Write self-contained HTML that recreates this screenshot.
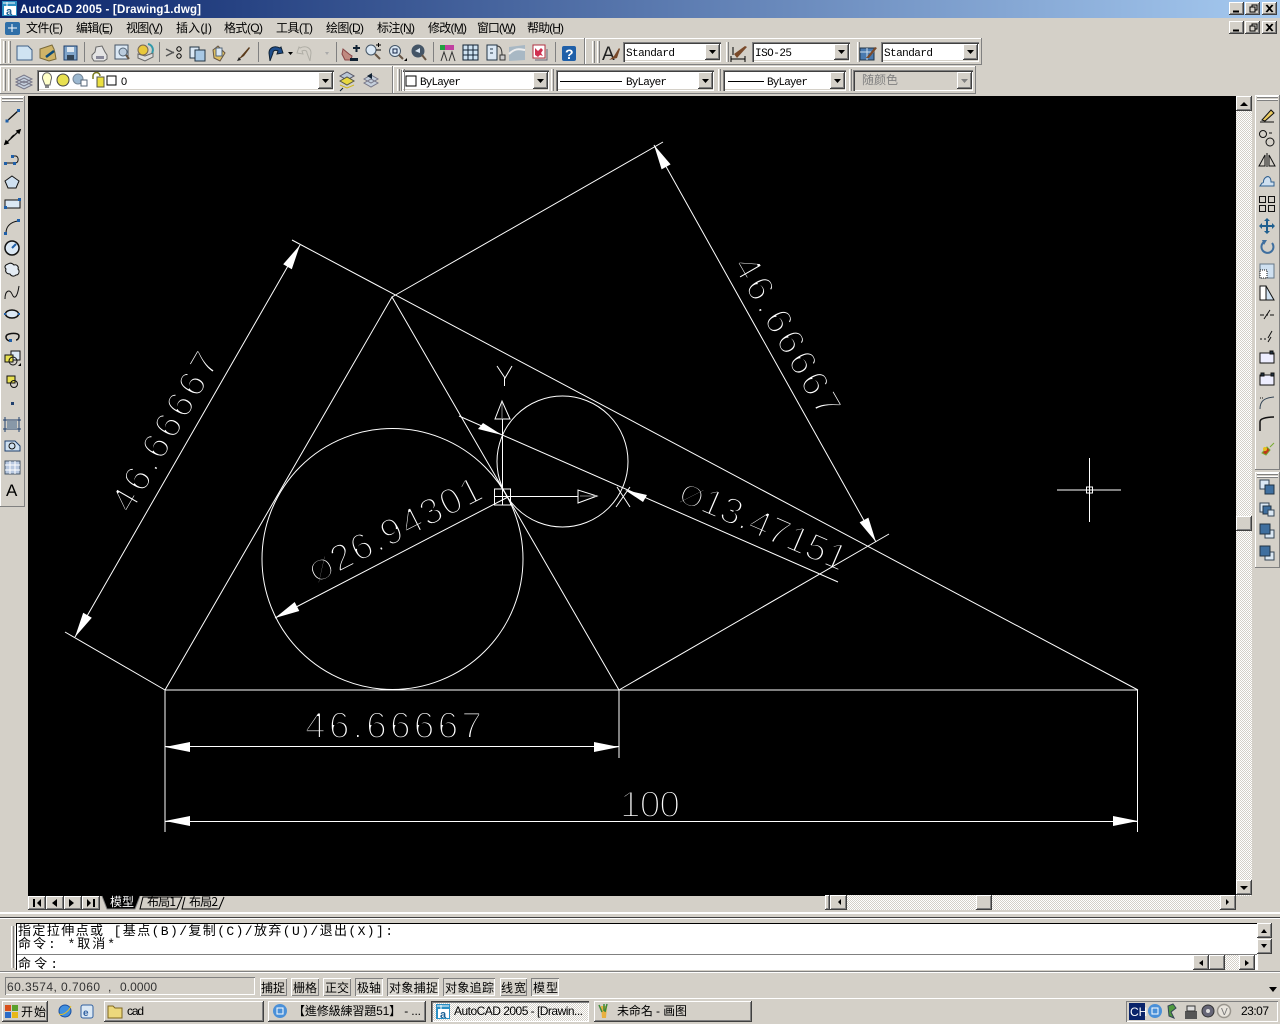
<!DOCTYPE html>
<html><head><meta charset="utf-8"><title>AutoCAD 2005</title>
<style>
html,body{margin:0;padding:0;width:1280px;height:1024px;overflow:hidden;background:#d4d0c8}
.a{position:absolute}
.up{position:absolute;background:#d4d0c8;box-shadow:inset -1px -1px #404040,inset 1px 1px #fff,inset -2px -2px #808080}
.tb{position:absolute;background:#d4d0c8;box-shadow:inset -1px -1px #808080,inset 1px 1px #fff}
.sk{position:absolute;background:#fff;box-shadow:inset 1px 1px #808080,inset 2px 2px #404040,inset -1px -1px #fff,inset -2px -2px #d4d0c8}
.ds{position:absolute;background:conic-gradient(#fff 25%,#d4d0c8 0 50%,#fff 0 75%,#d4d0c8 0) 0 0/2px 2px}
svg{position:absolute;left:0;top:0}
.m{font:12px "Liberation Sans","WenQuanYi Zen Hei","Noto Sans CJK SC",sans-serif;fill:#000}
.c{font:11px "Liberation Mono","Noto Sans CJK SC",monospace;fill:#000}
.s{font:12px "WenQuanYi Zen Hei","Noto Sans CJK SC",sans-serif;fill:#000}
.cmd{font:13px "Liberation Mono","WenQuanYi Zen Hei","Noto Sans CJK SC",monospace;fill:#000}
.t{font:12px "Liberation Sans","WenQuanYi Zen Hei","Noto Sans CJK TC",sans-serif;fill:#000}
.d{font-family:"Liberation Sans",sans-serif;font-size:37px;fill:#fff;stroke:#000;stroke-width:2}
</style></head><body>
<div class="a" style="left:0;top:0;width:1280px;height:18px;background:linear-gradient(90deg,#0a246a,#a6caf0)"></div>
<!-- toolbars -->
<div class="tb" style="left:0;top:38px;width:585px;height:27px"></div>
<div class="tb" style="left:585px;top:38px;width:397px;height:27px"></div>
<div class="tb" style="left:0;top:66px;width:393px;height:28px"></div>
<div class="tb" style="left:393px;top:66px;width:583px;height:28px"></div>
<div class="sk" style="left:623px;top:42px;width:98px;height:20px"></div>
<div class="sk" style="left:752px;top:42px;width:98px;height:20px"></div>
<div class="sk" style="left:881px;top:42px;width:98px;height:20px"></div>
<div class="sk" style="left:37px;top:70px;width:297px;height:21px"></div>
<div class="sk" style="left:401px;top:70px;width:148px;height:21px"></div>
<div class="sk" style="left:556px;top:70px;width:158px;height:21px"></div>
<div class="sk" style="left:723px;top:70px;width:123px;height:21px"></div>
<div class="sk" style="left:853px;top:70px;width:120px;height:21px;background:#d4d0c8"></div>
<div class="up" style="left:705px;top:44px;width:15px;height:16px"></div>
<div class="up" style="left:834px;top:44px;width:15px;height:16px"></div>
<div class="up" style="left:963px;top:44px;width:15px;height:16px"></div>
<div class="up" style="left:318px;top:72px;width:15px;height:17px"></div>
<div class="up" style="left:533px;top:72px;width:15px;height:17px"></div>
<div class="up" style="left:698px;top:72px;width:15px;height:17px"></div>
<div class="up" style="left:830px;top:72px;width:15px;height:17px"></div>
<div class="up" style="left:957px;top:72px;width:15px;height:17px"></div>
<!-- window buttons -->
<div class="up" style="left:1229px;top:2px;width:15px;height:13px"></div>
<div class="up" style="left:1245px;top:2px;width:15px;height:13px"></div>
<div class="up" style="left:1262px;top:2px;width:15px;height:13px"></div>
<div class="up" style="left:1229px;top:21px;width:15px;height:13px"></div>
<div class="up" style="left:1245px;top:21px;width:15px;height:13px"></div>
<div class="up" style="left:1262px;top:21px;width:15px;height:13px"></div>
<!-- side toolbars -->
<div class="tb" style="left:0;top:96px;width:25px;height:411px"></div>
<div class="tb" style="left:1255px;top:95px;width:25px;height:375px"></div>
<div class="tb" style="left:1255px;top:472px;width:25px;height:96px"></div>
<!-- canvas -->
<div class="a" style="left:28px;top:96px;width:1208px;height:800px;background:#000"></div>
<div class="ds" style="left:1236px;top:96px;width:16px;height:800px"></div>
<div class="up" style="left:1236px;top:96px;width:16px;height:15px"></div>
<div class="up" style="left:1236px;top:516px;width:16px;height:15px"></div>
<div class="up" style="left:1236px;top:880px;width:16px;height:15px"></div>
<!-- tab row -->
<div class="ds" style="left:847px;top:895px;width:373px;height:15px"></div>
<div class="up" style="left:825px;top:895px;width:5px;height:15px"></div>
<div class="up" style="left:830px;top:895px;width:17px;height:15px"></div>
<div class="up" style="left:976px;top:895px;width:16px;height:15px"></div>
<div class="up" style="left:1220px;top:895px;width:16px;height:15px"></div>
<div class="up" style="left:28px;top:896px;width:18px;height:14px"></div>
<div class="up" style="left:46px;top:896px;width:18px;height:14px"></div>
<div class="up" style="left:64px;top:896px;width:18px;height:14px"></div>
<div class="up" style="left:82px;top:896px;width:18px;height:14px"></div>
<div class="a" style="left:0;top:912px;width:1280px;height:2px;background:#fff"></div>
<div class="a" style="left:0;top:917px;width:1280px;height:1px;background:#404040"></div>
<div class="a" style="left:0;top:918px;width:1280px;height:1px;background:#fff"></div>
<!-- command -->
<div class="a" style="left:16px;top:923px;width:1242px;height:47px;background:#fff;border-top:1px solid #000;border-left:1px solid #000;box-sizing:border-box"></div>
<div class="a" style="left:17px;top:954px;width:1240px;height:1px;background:#808080"></div>
<div class="a" style="left:0;top:971px;width:1280px;height:1px;background:#808080"></div>
<div class="a" style="left:0;top:972px;width:1280px;height:1px;background:#fff"></div>
<div class="up" style="left:1257px;top:923px;width:15px;height:15px"></div>
<div class="up" style="left:1257px;top:939px;width:15px;height:15px"></div>
<div class="ds" style="left:1225px;top:955px;width:14px;height:15px"></div>
<div class="up" style="left:1193px;top:955px;width:16px;height:15px"></div>
<div class="up" style="left:1209px;top:955px;width:16px;height:15px"></div>
<div class="up" style="left:1239px;top:955px;width:16px;height:15px"></div>
<div class="a" style="left:5px;top:977px;width:250px;height:18px;box-shadow:inset 1px 1px #808080,inset -1px -1px #fff"></div>
<div class="a" style="left:260px;top:978px;width:27px;height:18px;box-shadow:inset 1px 1px #fff,inset -1px -1px #808080"></div>
<div class="a" style="left:291px;top:978px;width:28px;height:18px;box-shadow:inset 1px 1px #fff,inset -1px -1px #808080"></div>
<div class="a" style="left:323px;top:978px;width:28px;height:18px;box-shadow:inset 1px 1px #fff,inset -1px -1px #808080"></div>
<div class="a" style="left:355px;top:978px;width:28px;height:18px;box-shadow:inset 1px 1px #808080,inset -1px -1px #fff;background:#dad7d0"></div>
<div class="a" style="left:387px;top:978px;width:52px;height:18px;box-shadow:inset 1px 1px #808080,inset -1px -1px #fff;background:#dad7d0"></div>
<div class="a" style="left:443px;top:978px;width:52px;height:18px;box-shadow:inset 1px 1px #808080,inset -1px -1px #fff;background:#dad7d0"></div>
<div class="a" style="left:500px;top:978px;width:27px;height:18px;box-shadow:inset 1px 1px #fff,inset -1px -1px #808080"></div>
<div class="a" style="left:531px;top:978px;width:28px;height:18px;box-shadow:inset 1px 1px #808080,inset -1px -1px #fff;background:#dad7d0"></div>
<!-- taskbar -->
<div class="a" style="left:0;top:998px;width:1280px;height:1px;background:#fff"></div>
<div class="up" style="left:2px;top:1001px;width:46px;height:21px"></div>
<div class="up" style="left:104px;top:1001px;width:160px;height:21px"></div>
<div class="up" style="left:268px;top:1001px;width:158px;height:21px"></div>
<div class="a" style="left:431px;top:1001px;width:158px;height:21px;background:conic-gradient(#fff 25%,#d4d0c8 0 50%,#fff 0 75%,#d4d0c8 0) 0 0/2px 2px;box-shadow:inset 1px 1px #404040,inset 2px 2px #808080,inset -1px -1px #fff"></div>
<div class="up" style="left:594px;top:1001px;width:158px;height:21px"></div>
<div class="a" style="left:1126px;top:1001px;width:152px;height:21px;box-shadow:inset 1px 1px #808080,inset -1px -1px #fff"></div>

<svg width="1280" height="1024" viewBox="0 0 1280 1024">
<!-- title -->
<rect x="2" y="1" width="15" height="15" fill="#2a8fc4"/><rect x="4" y="6" width="12" height="9" fill="#fff"/><path d="M3 3h12M7 2v5" stroke="#fff"/>
<text x="6" y="15" style="font:700 11px 'Liberation Sans',sans-serif;fill:#1a5f94">a</text>
<text x="20" y="13" style="font:700 11.5px 'Liberation Sans',sans-serif;fill:#fff" textLength="181">AutoCAD 2005 - [Drawing1.dwg]</text>
<!-- win button glyphs -->
<g stroke="#000" fill="none">
<path d="M1233 12h6M1233 11h6"/><rect x="1250" y="7" width="5" height="5" fill="#d4d0c8"/><path d="M1252 7V5h5v5h-2M1252 5h5M1250 7h5"/><path d="M1266 5l6 7M1272 5l-6 7M1267 5l6 7M1273 5l-6 7"/>
<path d="M1233 31h6M1233 30h6"/><rect x="1250" y="26" width="5" height="5" fill="#d4d0c8"/><path d="M1252 26v-2h5v5h-2M1252 24h5M1250 26h5"/><path d="M1266 24l6 7M1272 24l-6 7M1267 24l6 7M1273 24l-6 7"/>
</g>
<!-- menu -->
<rect x="5" y="22" width="15" height="13" rx="2" fill="#2f6fa8"/><path d="M8 28h9M12 24v8" stroke="#fff"/>
<text class="m" x="26" y="32" textLength="37">文件(F)</text><text class="m" x="76" y="32" textLength="37">编辑(E)</text><text class="m" x="126" y="32" textLength="37">视图(V)</text><text class="m" x="176" y="32" textLength="36">插入(I)</text><text class="m" x="224" y="32" textLength="39">格式(O)</text><text class="m" x="276" y="32" textLength="37">工具(T)</text><text class="m" x="326" y="32" textLength="38">绘图(D)</text><text class="m" x="377" y="32" textLength="38">标注(N)</text><text class="m" x="428" y="32" textLength="39">修改(M)</text><text class="m" x="477" y="32" textLength="39">窗口(W)</text><text class="m" x="527" y="32" textLength="37">帮助(H)</text>
<path d="M54 33h5M104 33h5M154 33h5M203 33h4M254 33h6M304 33h5M355 33h5M406 33h6M457 33h7M506 33h7M554 33h6" stroke="#000"/>
<!-- grips & separators -->
<g stroke="#fff" fill="none"><path d="M3.5 41v22M8.5 41v22M3.5 69v22M8.5 69v22M592.5 41v22M597.5 41v22M397.5 69v22M402.5 69v22M551.5 69v22M718.5 69v22M849.5 69v22M726.5 42v20M857.5 42v20"/></g>
<g stroke="#808080" fill="none"><path d="M5.5 41v22M10.5 41v22M5.5 69v22M10.5 69v22M594.5 41v22M599.5 41v22M399.5 69v22M404.5 69v22M553.5 69v22M720.5 69v22M851.5 69v22M728.5 42v20M859.5 42v20"/>
<path d="M84.5 42v20M159.5 42v20M258.5 42v20M336.5 42v20M433.5 42v20M555.5 42v20"/></g>
<!-- toolbar1 icons -->
<g stroke-width="1">
<path d="M17 46h11l4 4v10H17z" fill="#cfe3f2" stroke="#3f5f85"/>
<path d="M40 49l12-4 2 4 1 4 1 6-7 2-9-3z" fill="#cfb468" stroke="#7a6a3a"/><path d="M46 57l8-6" stroke="#0a4a7a" stroke-width="2.500"/>
<rect x="64" y="46" width="13" height="14" fill="#7fa4c9" stroke="#1f3f6d"/><rect x="67" y="47" width="7" height="5" fill="#dfe8f0"/><rect x="67" y="55" width="7" height="5" fill="#345"/>
<path d="M95 52l1-5 6-1 3 6 2 3v4l-3 2H94l-2-3v-3z" fill="#e4e4e4" stroke="#666"/><rect x="96" y="56" width="8" height="3" fill="#889"/>
<path d="M115 45h13v14h-13z" fill="#dbe8f4" stroke="#456"/><circle cx="123" cy="52" r="4" fill="#bcd" stroke="#567"/><path d="M126 55l3 4" stroke="#654" stroke-width="2"/>
<path d="M138 54l7 2 8-3v4l-8 4-7-3z" fill="#ddd" stroke="#666"/><circle cx="143" cy="50" r="5" fill="#e8c83c" stroke="#765"/><path d="M148 44a6 6 0 0 1 4 9" stroke="#39a" fill="none" stroke-width="2"/>
<path d="M166 49l8 4M166 56l8-4" stroke="#555" stroke-width="1.500"/><circle cx="179" cy="49" r="2.200" fill="none" stroke="#000"/><circle cx="179" cy="56" r="2.200" fill="none" stroke="#000"/>
<rect x="190" y="47" width="9" height="11" fill="#dbe8f4" stroke="#234"/><rect x="195" y="50" width="10" height="11" fill="#a8c8e4" stroke="#234"/>
<path d="M213 50l5-4 7 7-5 8-6-3z" fill="#e0c060" stroke="#654"/><rect x="216" y="48" width="6" height="8" fill="#dbe8f4" stroke="#567"/>
<path d="M238 60l4-5 7-8 1 1-6 8z" fill="#5a3a1a"/><path d="M237 61l4-1-2-3z" fill="#222"/>
<path d="M280 48c-6-3-11 0-11 5l1 8 3-8c0-3 3-3 5-2l-1 3 6-1-2-6z" fill="#1e4d8b" stroke="#123"/><path d="M288 52h5l-2.500 3z" fill="#000"/>
<path d="M300 48c6-3 11 0 11 5l-1 8-3-8c0-3-3-3-5-2l1 3-6-1 2-6z" fill="#d4d0c8" stroke="#b0aea6"/><path d="M325 52h4l-2 3z" fill="#aaa"/>
<path d="M343 49l6 5 3 2-1 4h-6l-3-6z" fill="#c08a80" stroke="#844"/><path d="M353 48h7M356.500 45v7" stroke="#123" stroke-width="2"/><path d="M350 61h8v-3h-8z" fill="#123"/>
<circle cx="371" cy="50" r="5" fill="#dbe8f4" stroke="#456"/><path d="M375 54l5 5" stroke="#654" stroke-width="2"/><path d="M376 45h5M378.500 43v4M376 50h5" stroke="#000"/>
<circle cx="395" cy="51" r="5.500" fill="#dbe8f4" stroke="#456"/><rect x="393" y="49" width="4" height="4" fill="none" stroke="#124"/><path d="M399 55l4 4" stroke="#654" stroke-width="2"/><path d="M404 61h3v-3z" fill="#000"/>
<circle cx="418" cy="51" r="6" fill="#456" stroke="#456"/><path d="M415 51l5-3v5z" fill="#dbe8f4"/><path d="M422 55l4 5" stroke="#654" stroke-width="2"/>
<rect x="440" y="45" width="14" height="5" fill="#c040a0"/><rect x="440" y="45" width="5" height="5" fill="#20a040"/><path d="M441 61l3-9 3 9M449 61l3-9 3 9" stroke="#333" fill="none"/>
<rect x="463" y="45" width="15" height="15" fill="#cfe3f2" stroke="#123"/><path d="M468 45v15M473 45v15M463 50h15M463 55h15" stroke="#123"/>
<rect x="487" y="45" width="10" height="15" fill="#dbe8f4" stroke="#234"/><path d="M490 49h3M490 53h3" stroke="#234"/><path d="M497 46c4 0 5 4 5 9" fill="none" stroke="#333"/><path d="M500 55h5v5h-5z" fill="#ccc" stroke="#333"/>
<path d="M509 47l16-2v15l-16 1z" fill="#a8b8c4"/><path d="M509 54c6-6 10-5 16-4" fill="none" stroke="#eee" stroke-width="2"/>
<rect x="533" y="45" width="12" height="13" fill="#fff" stroke="#b03040"/><path d="M535 48l3 3 3-3 2 2-2 3 2 3-3-1-2 2-3-2z" fill="#d03050"/><path d="M535 60h12v-11" stroke="#667" fill="none"/>
<rect x="562" y="46" width="14" height="15" rx="2" fill="#1f5fa8"/><text x="565" y="59" style="font:700 14px 'Liberation Sans',sans-serif;fill:#fff">?</text>
<!-- style icons -->
<text x="602" y="60" style="font:400 19px 'Liberation Sans',sans-serif;fill:#222">A</text><path d="M609 60l5-4 5-8 1 1-3 9z" fill="#7a4a2a"/>
<path d="M731 59h14M731 56v6M745 56v6" stroke="#000"/><path d="M734 54l3 4 10-11-2-1z" fill="#7a4a2a"/><path d="M733 47v8" stroke="#000"/>
<rect x="860" y="48" width="14" height="12" fill="#4a7ab0" stroke="#234"/><path d="M860 52h14M867 48v12" stroke="#cde"/><path d="M866 58l9-11 2 1-8 10z" fill="#7a4a2a"/>
<!-- combo arrows -->
<g fill="#000"><path d="M709 50h7l-3.500 4zM838 50h7l-3.500 4zM967 50h7l-3.500 4zM322 79h7l-3.500 4zM537 79h7l-3.500 4zM702 79h7l-3.500 4zM834 79h7l-3.500 4z"/></g><path d="M961 79h7l-3.500 4z" fill="#808080"/>
<!-- layers -->
<g fill="#c4cfdc" stroke="#778"><path d="M16 85l8-4 8 4-8 4zM16 82l8-4 8 4-8 4zM16 79l8-4 8 4-8 4z"/></g>
<path d="M45 85h4v3h-4z" fill="#888"/><path d="M43 80a4.500 5 0 1 1 8 0l-1 5h-5z" fill="#ffffc8" stroke="#666"/>
<circle cx="63" cy="80" r="6" fill="#e8e050" stroke="#444"/>
<circle cx="78" cy="79" r="5" fill="#9cb8d0" stroke="#789"/><rect x="81" y="80" width="6" height="6" fill="#fff" stroke="#567"/>
<path d="M93 79v-3a3.500 3.500 0 0 1 7 0" fill="none" stroke="#7a7a20" stroke-width="1.500"/><rect x="97" y="77" width="7" height="10" fill="#ece040" stroke="#554"/>
<rect x="107" y="76" width="9" height="9" fill="#fff" stroke="#000"/>
<text x="121" y="85" style="font:11px 'Liberation Sans',sans-serif">0</text>
<path d="M340 76l7-4 7 4-7 4z" fill="#b9c6d6" stroke="#556"/><path d="M340 81l7-4 7 4-7 4z" fill="#e8d840" stroke="#554"/><path d="M340 85l7 3 7-3" stroke="#d0b820" fill="none"/><path d="M340 91l3-3" stroke="#123"/>
<g fill="#c4cfdc" stroke="#778"><path d="M364 83l7-4 7 4-7 4zM364 79l7-4 7 4-7 4z"/></g><path d="M367 76l5-3v6z" fill="#123"/>
<!-- combos text -->
<text class="c" x="626" y="56" textLength="49">Standard</text>
<text class="c" x="755" y="56" textLength="37">ISO-25</text>
<text class="c" x="884" y="56" textLength="49">Standard</text>
<rect x="406" y="76" width="10" height="10" fill="#fff" stroke="#000"/><text class="c" x="420" y="85" textLength="41">ByLayer</text>
<path d="M560 81.500h62M728 81.500h36" stroke="#000"/><text class="c" x="626" y="85" textLength="41">ByLayer</text><text class="c" x="767" y="85" textLength="41">ByLayer</text>
<text x="862" y="84" style="font:12px 'WenQuanYi Zen Hei','Noto Sans CJK SC',sans-serif;fill:#808080" textLength="36">随颜色</text>
</g>
<!-- left tool icons -->
<g fill="none" stroke="#111">
<path d="M2 97.500h21M2 100.500h21" stroke="#fff"/><path d="M2 98.500h21M2 101.500h21" stroke="#808080"/>
<path d="M7 121l11-10" stroke-width="1.300"/><rect x="5.500" y="119.500" width="3" height="3" fill="#1f5fa8" stroke="none"/><rect x="17" y="109" width="3" height="3" fill="#1f5fa8" stroke="none"/>
<path d="M5 144l15-14" stroke-width="1.300"/><path d="M5 144l3-1-2-2zM20 130l-3 1 2 2zM11 138l3-3" stroke="#000" stroke-width="1.500"/>
<path d="M6 163h9c4 0 4-6 1-7h-2"/><rect x="4" y="162" width="3" height="3" fill="#1f5fa8" stroke="none"/><rect x="13" y="162" width="3" height="3" fill="#1f5fa8" stroke="none"/><rect x="11" y="155" width="3" height="3" fill="#1f5fa8" stroke="none"/>
<path d="M12 176l7 5-3 7H8l-3-7z" fill="#cfe0f0"/>
<rect x="5" y="200" width="15" height="8" fill="#dbe8f4"/><rect x="4" y="206" width="3" height="3" fill="#1f5fa8" stroke="none"/><rect x="18" y="198" width="3" height="3" fill="#1f5fa8" stroke="none"/>
<path d="M6 233c0-7 5-11 12-12"/><rect x="4" y="232" width="3" height="3" fill="#1f5fa8" stroke="none"/><rect x="17" y="219" width="3" height="3" fill="#1f5fa8" stroke="none"/>
<circle cx="12" cy="248" r="7" fill="#dbe8f4" stroke-width="1.500"/><path d="M12 248l4-4" stroke="#1f5fa8" stroke-width="2"/>
<path d="M8 264c3-2 5 0 6 1 3-1 5 2 4 4 2 2 1 6-2 6-2 2-5 1-6-1-4 0-5-3-4-5-2-2-1-4 2-5z" fill="#e4ecf4"/>
<path d="M5 299c0-9 5-10 7-5s5 5 7-8"/>
<ellipse cx="12" cy="314" rx="6.500" ry="4" fill="#dbe8f4" stroke-width="1.500"/><rect x="4" y="313" width="2" height="2" fill="#1f5fa8" stroke="none"/><rect x="18" y="313" width="2" height="2" fill="#1f5fa8" stroke="none"/>
<path d="M9 341c-4-2-4-6 0-7s10-1 10 2-2 4-3 4" stroke-width="1.500"/><rect x="9" y="339" width="3" height="3" fill="#1f5fa8" stroke="none"/>
<rect x="11" y="351" width="9" height="9" fill="#dbe8f4"/><rect x="5" y="355" width="8" height="7" fill="#e8e050"/><circle cx="13" cy="361" r="4"/><path d="M18 366h3v-3z" fill="#000" stroke="none"/>
<rect x="7" y="376" width="8" height="7" fill="#e8e050" stroke-width="1"/><circle cx="14" cy="384" r="3.500"/>
<rect x="11" y="402" width="3" height="3" fill="#1f3f6d" stroke="none"/>
<path d="M5 417v15M19 417v15M3 420h18M3 429h18" stroke="#1f3f6d"/><path d="M7 421h10v8H7z" fill="#8898a8" stroke="none"/>
<path d="M5 441h10l5 5v5H5z" fill="#cfe0f0" stroke="#1f3f6d"/><circle cx="12" cy="446" r="3"/>
<rect x="5" y="461" width="15" height="13" fill="#b8c8e0" stroke="#456"/><path d="M10 461v13M15 461v13M5 465h15M5 470h15" stroke="#fff"/>
</g>
<text x="6" y="496" style="font:17px 'Liberation Sans',sans-serif">A</text>
<!-- right tool icons -->
<g fill="none" stroke="#111">
<path d="M1257 96.500h21M1257 99.500h21M1257 473.500h21M1257 476.500h21" stroke="#fff"/><path d="M1257 97.500h21M1257 100.500h21M1257 474.500h21M1257 477.500h21" stroke="#808080"/>
<path d="M1260 122h14M1262 120l9-10 3 3-9 8z" fill="#e8c860"/>
<circle cx="1263" cy="134" r="3.500"/><circle cx="1270" cy="142" r="4"/><path d="M1269 133h3"/>
<path d="M1267 153v14M1265 166h-6l6-11zM1269 166h6l-6-11z"/>
<path d="M1260 186h14v-4h-3c0-5-3-7-6-4s0 5-3 5z" fill="#cfe0f0" stroke="#2f5f8f"/>
<rect x="1259.500" y="196.500" width="6" height="6"/><rect x="1268.500" y="196.500" width="6" height="6"/><rect x="1259.500" y="205.500" width="6" height="6"/><rect x="1268.500" y="205.500" width="6" height="6"/>
<path d="M1267 219v14M1260 226h14" stroke="#1f5f8f" stroke-width="2"/><path d="M1267 218l-3 3h6zM1267 234l-3-3h6zM1259 226l3-3v6zM1275 226l-3-3v6z" fill="#1f5f8f" stroke="none"/>
<path d="M1272 243a6 6 0 1 1-8-1" stroke="#3f6f9f" stroke-width="2"/><path d="M1262 240l5 0-3 5z" fill="#3f6f9f" stroke="none"/>
<rect x="1260" y="264" width="14" height="14" fill="#cfe0f0" stroke="#678"/><path d="M1260 270h7v8h-7z" fill="#fff" stroke-dasharray="1 1"/>
<path d="M1260 286h6l8 14h-14z" fill="#cfe0f0"/><path d="M1260 286h6v14h-6z" fill="#fff"/>
<path d="M1260 315h4M1266 315h2M1270 315h4M1264 319l6-9"/>
<path d="M1260 339h2M1264 339h2M1268 338l4-7M1268 342l3-5"/>
<rect x="1260" y="353" width="14" height="10" fill="#eef"/><path d="M1270 351h3v3h-3z" fill="#234"/>
<rect x="1260" y="375" width="14" height="10" fill="#eef"/><path d="M1261 373h3v3h-3zM1271 373h3v3h-3z" fill="#234"/>
<path d="M1260 409c0-8 4-11 14-12" stroke="#345"/><path d="M1260 398h4" stroke-dasharray="1 1"/>
<path d="M1260 431v-9c0-1 0-2 2-3s7-2 12-2" stroke-width="1.500"/>
<path d="M1262 453l5-6 3 3-4 5zM1270 447l4-4" fill="#c03818" stroke="#7a3"/><circle cx="1265" cy="449" r="2" fill="#e8c020" stroke="none"/>
<rect x="1260" y="480" width="9" height="9" fill="#dbe8f4" stroke="#345"/><rect x="1265" y="485" width="9" height="9" fill="#3f6f9f" stroke="#234"/>
<rect x="1260" y="503" width="9" height="9" fill="#dbe8f4" stroke="#345"/><rect x="1263" y="506" width="8" height="8" fill="#3f6f9f" stroke="#234"/><rect x="1268" y="510" width="6" height="6" fill="#dbe8f4" stroke="#345"/>
<rect x="1265" y="530" width="9" height="8" fill="#dbe8f4" stroke="#345"/><rect x="1260" y="524" width="10" height="10" fill="#3f6f9f" stroke="#234"/>
<rect x="1265" y="552" width="9" height="8" fill="#dbe8f4" stroke="#345"/><rect x="1260" y="546" width="10" height="10" fill="#3f6f9f" stroke="#234"/>
</g>
<!-- scroll arrows -->
<g fill="#000">
<path d="M1240 106h8l-4-4zM1240 886h8l-4 4z"/>
<path d="M841 899l-3 3 3 3zM1226 899l3 3-3 3z"/>
<path d="M1261 933h6l-3-4zM1261 944h6l-3 4zM1203 960l-4 3 4 3zM1245 960l4 3-4 3z"/><path d="M1269 987h8l-4 5z"/>
<path d="M33 899v8h2v-8zM41 899l-4 4 4 4zM57 899l-5 4 5 4zM69 899l5 4-5 4zM87 899l4 4-4 4zM93 899v8h2v-8z"/>
</g>
<!-- tabs -->
<path d="M102 896l5 13h28l5-13z" fill="#000"/><path d="M102 896l5 13h28l5-13" fill="none" stroke="#808080"/>
<path d="M143 897l-3 12h37l5-12zM185 897l-3 12h37l5-12" fill="#d4d0c8" stroke="#000"/>
<text class="s" x="110" y="906" style="fill:#fff" textLength="24">模型</text>
<text class="s" x="147" y="906" textLength="29">布局1</text><text class="s" x="189" y="906" textLength="29">布局2</text>
<!-- dimension text (drawn first; eroded by black stroke to thin lines) -->
<text class="d" x="305" y="738" textLength="177">46,66667</text>
<text class="d" x="620" y="817" textLength="60">100</text>
<text class="d" transform="translate(131 515) rotate(-60)" textLength="178">46,66667</text>
<text class="d" transform="translate(732 265) rotate(60)" textLength="178">46,66667</text>
<text class="d" transform="translate(316 584) rotate(-27)" textLength="190"><tspan font-size="30">Ø</tspan>26,94301</text>
<text class="d" transform="translate(677 501) rotate(23.400)" textLength="178"><tspan font-size="30">Ø</tspan>13,47151</text>
<!-- drawing -->
<g stroke="#fff" fill="none" stroke-width="1">
<path d="M165 690H1138M165 690L392 297L619 690M292 240L1138 690M392 297L663 142M619 690L889 534M65 632L165 690"/>
<circle cx="392.500" cy="559" r="130.500"/><circle cx="562.500" cy="461.500" r="65.500"/>
<path d="M75 637L300 245M654 145L876 542M275 618L508 497M459 416L838 582"/>
<path d="M165 690V832M619 690V758M1137.500 690V832M165 746.500H619M165 821.500H1138"/>
<path d="M1057 490h64M1089.500 458v64"/><rect x="1086.500" y="487" width="6" height="6"/>
<rect x="494.500" y="489" width="16" height="16"/><path d="M502.500 419V505M494.500 496.500H578M502 401L495 419H510ZM578 490V503L597 496ZM497 366L505 378L512 366M504.500 378V386"/>
<path d="M502 403V418M580 496H596" stroke="#808080"/>
<path d="M617 487L630 507M630 487L616 507"/>
</g>
<g fill="#fff">
<path d="M165 747l25-5v10zM619 747l-25-5v10zM165 821l25-5v10zM1138 821l-25-5v10z"/>
<path d="M75 637L91.800 617.800L83.200 612.800ZM300 245L291.800 269.200L283.200 264.200ZM654 145L670.600 164.400L661.600 169.400ZM876 542L868.400 517.600L859.600 522.400ZM275 618L299.300 611L294.700 602ZM502 435L483 423L478 429ZM625 490L647 495L643 502Z"/>
</g>
<!-- command text -->
<text class="cmd" x="18" y="935" textLength="375">指定拉伸点或 [基点(B)/复制(C)/放弃(U)/退出(X)]:</text>
<text class="cmd" x="18" y="948" textLength="97">命令: *取消*</text>
<text class="cmd" x="18" y="968" textLength="40">命令:</text>
<path d="M11.500 926v42M15.500 926v42" stroke="#fff"/><path d="M13.500 926v42" stroke="#808080"/>
<!-- status -->
<g style="font:12px 'Liberation Sans',sans-serif;fill:#333"><text x="7" y="991" textLength="93">60.3574, 0.7060</text><text x="108" y="991">,</text><text x="120" y="991" textLength="37">0.0000</text></g>
<text class="s" x="261" y="992" textLength="24">捕捉</text><text class="s" x="293" y="992" textLength="24">栅格</text><text class="s" x="325" y="992" textLength="24">正交</text><text class="s" x="357" y="992" textLength="24">极轴</text><text class="s" x="389" y="992" textLength="49">对象捕捉</text><text class="s" x="445" y="992" textLength="49">对象追踪</text><text class="s" x="501" y="992" textLength="25">线宽</text><text class="s" x="533" y="992" textLength="25">模型</text>
<!-- taskbar content -->
<rect x="5" y="1005" width="6" height="6" fill="#d8501c"/><rect x="12" y="1005" width="6" height="6" fill="#5aa02c"/><rect x="5" y="1012" width="6" height="6" fill="#2c6cc8"/><rect x="12" y="1012" width="6" height="6" fill="#e8b818"/>
<text class="t" x="21" y="1016" textLength="25">开始</text>
<circle cx="65" cy="1011" r="6" fill="#3f8fe0" stroke="#1a4f9f"/><path d="M59 1014c4 2 10-3 12-8" stroke="#e8c020" fill="none"/>
<rect x="81" y="1005" width="12" height="13" rx="2" fill="#dbe8f4" stroke="#3060a0"/><text x="83" y="1016" style="font:700 10px 'Liberation Sans',sans-serif;fill:#3060a0">e</text>
<path d="M108 1006h5l2 2h7v10h-14z" fill="#ecd87c" stroke="#806820"/>
<text class="t" x="127" y="1015" textLength="17">cad</text>
<circle cx="280" cy="1011" r="7" fill="#4a90d8"/><rect x="277" y="1008" width="6" height="6" fill="none" stroke="#fff"/>
<text class="t" x="293" y="1015" textLength="128">【進修級練習題51】 - ...</text>
<rect x="436" y="1004" width="14" height="15" fill="#2a8fc4"/><rect x="438" y="1009" width="11" height="9" fill="#fff"/><path d="M437 1006h12M441 1005v5" stroke="#fff"/><text x="440" y="1018" style="font:700 11px 'Liberation Sans',sans-serif;fill:#1a5f94">a</text>
<text class="t" x="454" y="1015" textLength="129">AutoCAD 2005 - [Drawin...</text>
<path d="M601 1006l6 0-1 12h-4z" fill="#e8b040"/><path d="M599 1005l3 7M607 1004l-2 8M604 1004v7" stroke="#3a8a3a" stroke-width="1.500"/>
<text class="t" x="617" y="1015" textLength="70">未命名 - 画图</text>
<!-- tray -->
<rect x="1129" y="1003" width="16" height="17" fill="#0a246a"/><text x="1130" y="1016" style="font:12px 'Liberation Sans',sans-serif;fill:#fff">CH</text>
<circle cx="1155" cy="1011" r="7" fill="#4a90d8"/><rect x="1152" y="1008" width="6" height="6" fill="none" stroke="#fff"/>
<path d="M1168 1006l5-2 3 4-5 4 3 6-5-2z" fill="#509a40" stroke="#345"/>
<rect x="1185" y="1011" width="12" height="8" fill="#555"/><rect x="1187" y="1006" width="8" height="5" fill="#ddd" stroke="#333"/>
<circle cx="1208" cy="1011" r="6" fill="#667" stroke="#333"/><circle cx="1208" cy="1011" r="2" fill="#ddd"/>
<circle cx="1224" cy="1011" r="6.500" fill="#e8e4dc" stroke="#9a968e" stroke-width="1.500"/><text x="1221" y="1015" style="font:10px 'Liberation Sans',sans-serif;fill:#777">V</text>
<text class="t" x="1241" y="1015" textLength="28">23:07</text>
</svg>
</body></html>
